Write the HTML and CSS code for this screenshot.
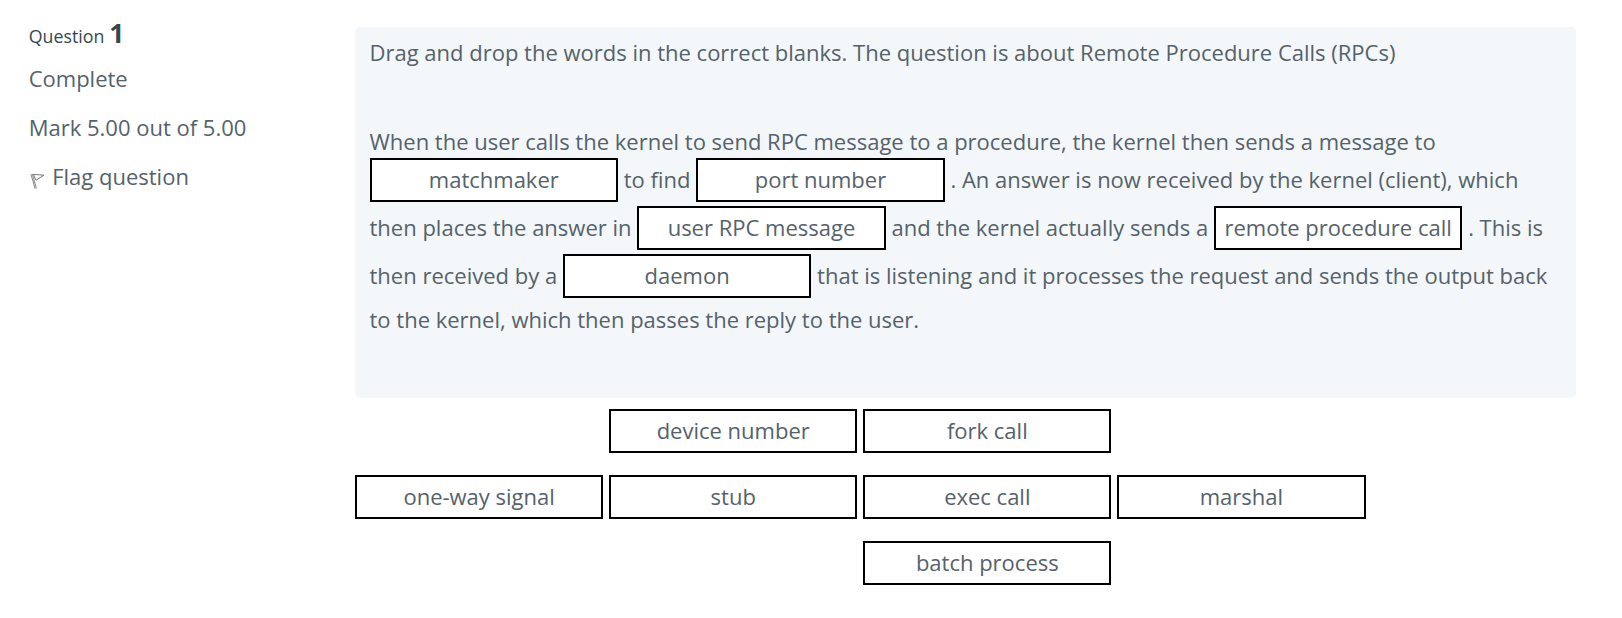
FILE: index.html
```html
<!DOCTYPE html>
<html lang="en">
<head>
<meta charset="utf-8">
<title>Question 1</title>
<link rel="stylesheet" href="styles.css">
</head>
<body>
<main class="question">
  <aside class="info">
    <h3 class="heading">Question <strong class="number">1</strong></h3>
    <div class="state">Complete</div>
    <div class="state">Mark 5.00 out of 5.00</div>
    <div class="state flag"><svg class="flag-icon" viewBox="0 0 16 16" width="16" height="16"><path d="M.9 1 5.2 15.8M2.3.9 6.4 15.4" fill="none" stroke="#777" stroke-width=".9"/><path d="M3.4 1.4 14 2.2 6 7.2Z" fill="none" stroke="#777" stroke-width="1"/></svg><span>Flag question</span></div>
  </aside>
  <section class="content">
    <div class="formulation">
      <p class="intro">Drag and drop the words in the correct blanks. The question is about Remote Procedure Calls (RPCs)</p>
      <p class="line first"><span class="text">When the user calls the kernel to send RPC message to a procedure, the kernel then sends a message to</span></p>
      <p class="line"><span class="box">matchmaker</span><span class="text">to find</span><span class="box">port number</span><span class="text">. An answer is now received by the kernel (client), which</span></p>
      <p class="line"><span class="text">then places the answer in</span><span class="box">user RPC message</span><span class="text">and the kernel actually sends a</span><span class="box">remote procedure call</span><span class="text">. This is</span></p>
      <p class="line"><span class="text">then received by a</span><span class="box">daemon</span><span class="text">that is listening and it processes the request and sends the output back</span></p>
      <p class="line last"><span class="text">to the kernel, which then passes the reply to the user.</span></p>
    </div>
    <div class="choices">
      <span class="box c2">device number</span><span class="box c3">fork call</span>
      <span class="box c1">one-way signal</span><span class="box c2">stub</span><span class="box c3">exec call</span><span class="box c4">marshal</span>
      <span class="box c3">batch process</span>
    </div>
  </section>
</main>
</body>
</html>
```
FILE: styles.css
```css
* { box-sizing: border-box; }
body { margin: 0; background: #fff; color: #55626b; font: 22px/36px "Open Sans", sans-serif; }
.question { display: flex; width: 1622px; height: 618px; padding: 27px 46px 0 28px; }
.info { flex: 0 0 327px; padding-left: 0.7px; }
.heading { margin: -12px 0 0; font-size: 17.8px; font-weight: 400; line-height: 36px; color: #37474f; }
.number { margin-left: 0.2px; font-size: 26.4px; }
.state { height: 49px; line-height: 49px; }
.flag { display: flex; align-items: center; }
.flag-icon { margin: 8px 6.5px 0 1px; }
.content { width: 1221px; }
.formulation { height: 371px; padding: 7px 14.5px; background: #f3f7fa; border-radius: 5px; }
p { margin: 0; white-space: nowrap; }
.intro { height: 94px; }
.line { display: flex; align-items: center; gap: 5.7px; height: 48px; }
.line .box { width: 248.6px; }
.first { height: 28px; }
.last { height: 40px; }
.text { padding-bottom: 2px; }
.box { flex: none; width: 248.25px; height: 44px; border: 2px solid #000; background: #fff; text-align: center; line-height: 38px; white-space: nowrap; }
.choices { display: grid; grid-template-columns: repeat(4, 248.25px); gap: 22px 5.85px; margin-top: 11px; }
.c1 { grid-column: 1; }
.c2 { grid-column: 2; }
.c3 { grid-column: 3; }
.c4 { grid-column: 4; }
```
